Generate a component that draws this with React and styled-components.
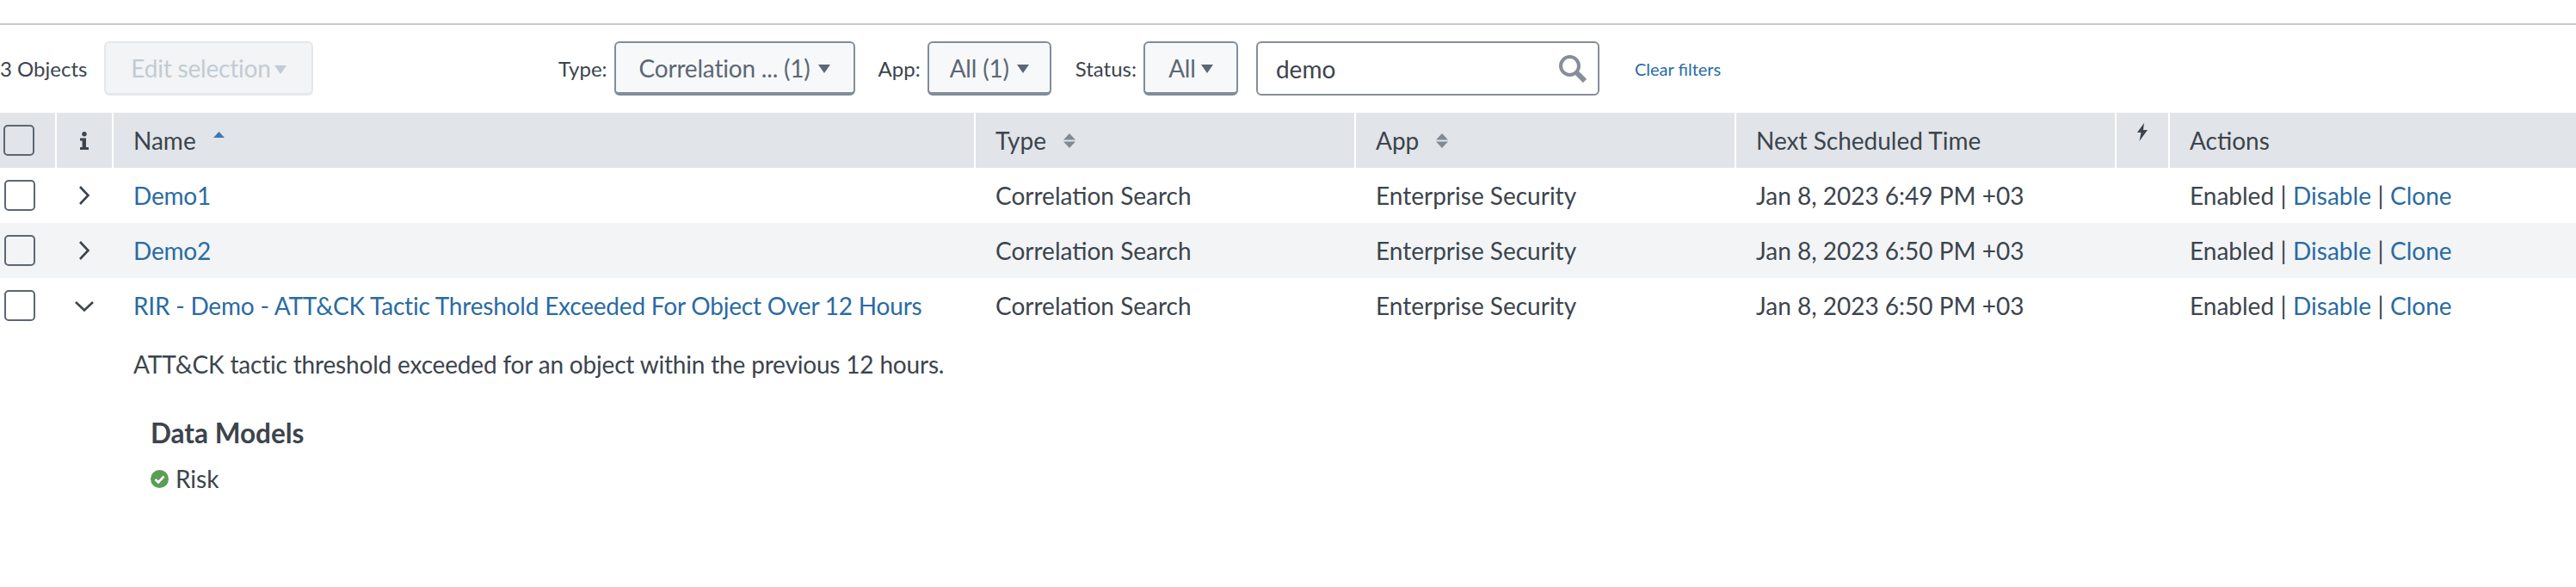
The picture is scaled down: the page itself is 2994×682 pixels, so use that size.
import React from 'react';
import styled, { createGlobalStyle } from 'styled-components';

const GlobalStyle = createGlobalStyle`
  html, body {
    margin: 0;
    background: #fff;
    font-family: Lato, "Open Sans", sans-serif;
    font-size: 28px;
    color: #3c444d;
  }
`;

const COLUMNS = '64px 64px 1000px 440px 440px 440px 60px 472px';

const Page = styled.div`
  width: 2994px;
  height: 682px;
  overflow: hidden;
  padding-top: 27px;
  box-sizing: border-box;
`;

const Divider = styled.div`
  height: 2px;
  background: #c8cccf;
`;

const Toolbar = styled.div`
  display: flex;
  align-items: center;
  height: 63px;
  margin-top: 19px;
  margin-bottom: 20px;
`;

const LeftGroup = styled.div`
  width: 649px;
  display: flex;
  align-items: center;
  gap: 21px;
`;

const Count = styled.span`
  width: 100px;
  font-size: 24px;
  white-space: nowrap;
`;

const FilterItem = styled.div`
  display: flex;
  align-items: center;
  gap: 8px;
  margin-right: ${(p) => p.$after}px;
`;

const FilterLabel = styled.span`
  font-size: 24px;
  white-space: nowrap;
`;

const Dropdown = styled.div`
  width: ${(p) => p.$width}px;
  height: 63px;
  box-sizing: border-box;
  display: flex;
  align-items: center;
  justify-content: center;
  gap: ${(p) => p.$gap ?? 9}px;
  border: 2px solid ${(p) => (p.$disabled ? '#e4e8eb' : '#818d99')};
  border-bottom-width: ${(p) => (p.$disabled ? 3 : 4)}px;
  border-radius: 6px;
  background: ${(p) => (p.$disabled ? '#f2f4f5' : '#f7f8fa')};
  color: ${(p) => (p.$disabled ? '#c3cbd4' : '#5c6773')};
  letter-spacing: -0.2px;
  white-space: nowrap;
`;

const Caret = styled.span`
  width: 0;
  height: 0;
  margin-top: 3px;
  border-left: 7px solid transparent;
  border-right: 7px solid transparent;
  border-top: 10px solid ${(p) => (p.$disabled ? '#c3cbd4' : '#5c6773')};
`;

const SearchBox = styled.div`
  width: 399px;
  height: 63px;
  box-sizing: border-box;
  display: flex;
  align-items: center;
  justify-content: space-between;
  padding: 0 13px 0 21px;
  border: 2px solid #878d99;
  border-radius: 6px;
  margin-right: 41px;
`;

const ClearLink = styled.a`
  font-size: 20px;
  color: #2a6ba3;
  white-space: nowrap;
`;

const Row = styled.div`
  display: grid;
  grid-template-columns: ${COLUMNS};
  column-gap: 2px;
  height: 64px;
  align-items: center;
  background: ${(p) => (p.$striped ? '#f2f4f5' : '#fff')};
`;

const HeaderCell = styled.div`
  height: 64px;
  box-sizing: border-box;
  background: #e1e4e8;
  display: flex;
  align-items: center;
  justify-content: ${(p) => (p.$center ? 'center' : 'flex-start')};
  padding-left: ${(p) => (p.$center ? 0 : p.$pad ?? 23)}px;
  gap: 20px;
  white-space: nowrap;
`;

const BoltCell = styled(HeaderCell)`
  align-items: flex-start;
  padding-top: 12px;
`;

const Cell = styled.div`
  display: flex;
  align-items: center;
  justify-content: ${(p) => (p.$center ? 'center' : 'flex-start')};
  padding-left: ${(p) => (p.$center ? 0 : p.$pad ?? 23)}px;
  white-space: nowrap;
`;

const Checkbox = styled.span`
  display: block;
  width: 36px;
  height: 36px;
  box-sizing: border-box;
  border: 2.5px solid #5c6773;
  border-radius: 5px;
`;

const Link = styled.a`
  color: #2a6ba3;
`;

const NameLink = styled(Link)`
  letter-spacing: -0.2px;
`;

const Sep = styled.span`
  margin: 0 7.5px;
`;

const Details = styled.div`
  padding: 19px 0 0 155px;
`;

const Description = styled.p`
  margin: 0;
  line-height: 34px;
  letter-spacing: -0.18px;
`;

const Section = styled.div`
  padding: 43px 0 0 20px;
`;

const SectionTitle = styled.h3`
  margin: 0;
  font-size: 31.5px;
  font-weight: 700;
  line-height: 40px;
`;

const ModelRow = styled.div`
  display: flex;
  align-items: center;
  gap: 8px;
  margin-top: 16px;
  line-height: 34px;
`;

const rows = [
  { name: 'Demo1', time: 'Jan 8, 2023 6:49 PM +03' },
  { name: 'Demo2', time: 'Jan 8, 2023 6:50 PM +03', striped: true },
  { name: 'RIR - Demo - ATT&CK Tactic Threshold Exceeded For Object Over 12 Hours', time: 'Jan 8, 2023 6:50 PM +03', open: true },
];

const SortBoth = () => (
  <svg width="14" height="17" viewBox="0 0 14 17">
    <path d="M7 0 14 7.5H0zM7 17 0 9.5h14z" fill="#7f8a96" />
  </svg>
);

const SortUp = () => (
  <svg width="13" height="7" viewBox="0 0 13 7" style={{ marginTop: -14 }}>
    <path d="M6.5 0 13 7H0z" fill="#3a79b8" />
  </svg>
);

const InfoIcon = () => (
  <svg width="10" height="21" viewBox="0 0 10 21">
    <circle cx="5" cy="2.7" r="2.7" fill="#3c444d" />
    <path d="M0 7.5h7v10.5h3V21H0v-3h2.6v-7.5H0z" fill="#3c444d" />
  </svg>
);

const BoltIcon = () => (
  <svg width="12" height="21" viewBox="0 0 12 21">
    <path d="M8 0 0 11h4.5L2.5 21 12 8H7z" fill="#3c444d" />
  </svg>
);

const Chevron = ({ open }) => (
  <svg width="22" height="22" viewBox="0 0 22 22" fill="none" stroke="#3c444d" strokeWidth="2.6">
    {open ? <path d="M1 7l10 9.5L21 7" /> : <path d="M6 1l9.5 10L6 21" />}
  </svg>
);

const SearchIcon = () => (
  <svg width="32" height="32" viewBox="0 0 32 32" fill="none" stroke="#878d99">
    <circle cx="12.5" cy="12.5" r="10.5" strokeWidth="4" />
    <path d="M20 20l10 10" strokeWidth="6" />
  </svg>
);

const CheckCircle = () => (
  <svg width="21" height="21" viewBox="0 0 21 21">
    <circle cx="10.5" cy="10.5" r="10.5" fill="#5a9e56" />
    <path d="M5.5 11l3.5 3.5 6.5-7" fill="none" stroke="#fff" strokeWidth="2.6" />
  </svg>
);

function App() {
  return (
    <Page>
      <GlobalStyle />
      <Divider />
      <Toolbar>
        <LeftGroup>
          <Count>3 Objects</Count>
          <Dropdown $width={243} $gap={4} $disabled>
            Edit selection <Caret $disabled />
          </Dropdown>
        </LeftGroup>
        <FilterItem $after={27}>
          <FilterLabel>Type:</FilterLabel>
          <Dropdown $width={280}>Correlation ... (1) <Caret /></Dropdown>
        </FilterItem>
        <FilterItem $after={28}>
          <FilterLabel>App:</FilterLabel>
          <Dropdown $width={144}>All (1) <Caret /></Dropdown>
        </FilterItem>
        <FilterItem $after={21}>
          <FilterLabel>Status:</FilterLabel>
          <Dropdown $width={110} $gap={6}>All <Caret /></Dropdown>
        </FilterItem>
        <SearchBox>
          demo
          <SearchIcon />
        </SearchBox>
        <ClearLink>Clear filters</ClearLink>
      </Toolbar>

      <Row>
        <HeaderCell $pad={4}><Checkbox /></HeaderCell>
        <HeaderCell $center><InfoIcon /></HeaderCell>
        <HeaderCell>Name <SortUp /></HeaderCell>
        <HeaderCell>Type <SortBoth /></HeaderCell>
        <HeaderCell>App <SortBoth /></HeaderCell>
        <HeaderCell>Next Scheduled Time</HeaderCell>
        <BoltCell $center><BoltIcon /></BoltCell>
        <HeaderCell>Actions</HeaderCell>
      </Row>

      {rows.map((row) => (
        <Row key={row.name} $striped={row.striped}>
          <Cell $pad={5}><Checkbox /></Cell>
          <Cell $center><Chevron open={row.open} /></Cell>
          <Cell><NameLink>{row.name}</NameLink></Cell>
          <Cell>Correlation Search</Cell>
          <Cell>Enterprise Security</Cell>
          <Cell>{row.time}</Cell>
          <Cell />
          <Cell>
            Enabled<Sep>|</Sep><Link>Disable</Link><Sep>|</Sep><Link>Clone</Link>
          </Cell>
        </Row>
      ))}

      <Details>
        <Description>ATT&amp;CK tactic threshold exceeded for an object within the previous 12 hours.</Description>
        <Section>
          <SectionTitle>Data Models</SectionTitle>
          <ModelRow><CheckCircle /> Risk</ModelRow>
        </Section>
      </Details>
    </Page>
  );
}

export default App;
